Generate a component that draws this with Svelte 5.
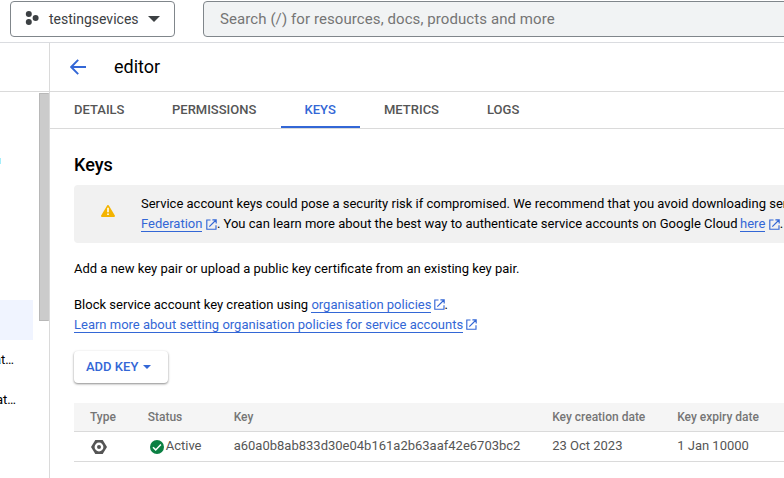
<script>
  const tabs = [
    { name: 'DETAILS', width: 98 },
    { name: 'PERMISSIONS', width: 133 },
    { name: 'KEYS', width: 79, active: true },
    { name: 'METRICS', width: 103 },
    { name: 'LOGS', width: 80 }
  ];
</script>

{#snippet external()}
  <svg class="ext" width="11" height="11" viewBox="0 0 11 11" fill="none" stroke="currentColor" stroke-width="1.15">
    <path d="M4.5 1H.8v9.2h9.2V6.3M6.4.8h3.8v3.8M10 1 3.3 7.7" />
  </svg>
{/snippet}

<div class="page">
  <header class="topbar">
    <button class="project">
      <svg width="14" height="14" viewBox="0 0 14 14" fill="#3c4043">
        <circle cx="3.8" cy="3" r="3" /><circle cx="3.8" cy="11" r="3" /><circle cx="10.6" cy="7" r="3" />
      </svg>
      <span>testingsevices</span>
      <svg class="caret" width="12" height="6" viewBox="0 0 12 6"><path d="M0 0h12L6 6z" fill="#3c4043" /></svg>
    </button>
    <div class="search"><span>Search (/) for resources, docs, products and more</span></div>
  </header>

  <div class="body">
    <aside>
      <div class="sidehead"></div>
      <div class="sidebody">
        <nav>
          <i class="speck"></i>
          <div class="selected"></div>
          <div class="item"><span>at…</span></div>
          <div class="item second"><span>at…</span></div>
        </nav>
        <div class="thumb"></div>
      </div>
    </aside>

    <main>
      <div class="title">
        <svg width="16" height="16" viewBox="0 0 16 16" fill="none" stroke="#3367d6" stroke-width="1.9"><path d="M8.2.8 1.2 8l7 7.2M1.3 8H16" /></svg>
        <h1>editor</h1>
      </div>
      <div class="tabs">
        {#each tabs as tab}
          <div class="tab" class:active={tab.active} style:width="{tab.width}px"><span>{tab.name}</span></div>
        {/each}
      </div>

      <section>
        <h2>Keys</h2>
        <div class="notice">
          <svg width="14" height="12" viewBox="0 0 14 12">
            <path d="M7 1 13 11H1z" fill="#f4b400" stroke="#f4b400" stroke-width="2" stroke-linejoin="round" />
            <path d="M6.2 2.7h1.6v4.5H6.2zM6.2 8.4h1.6v1.5H6.2z" fill="#fff" />
          </svg>
          <div class="message">
            <div>Service account keys could pose a security risk if compromised. We recommend that you avoid downloading service account keys</div>
            <div class="links"><a href="#wif">Federation</a>{@render external()}<span>. You can learn more about the best way to authenticate service accounts on Google Cloud</span><a class="here" href="#here">here</a>{@render external()}<span>.</span></div>
          </div>
        </div>
        <p class="add">Add a new key pair or upload a public key certificate from an existing key pair.</p>
        <p class="block">Block service account key creation using <a href="#policies">organisation policies</a>{@render external()}.</p>
        <p class="learn"><a href="#learn">Learn more about setting organisation policies for service accounts</a>{@render external()}</p>
        <button class="addkey"><span>ADD KEY</span><svg width="8" height="4" viewBox="0 0 8 4"><path d="M0 0h8L4 4z" fill="#3367d6" /></svg></button>

        <div class="table">
          <div class="row head"><div><span>Type</span></div><div><span>Status</span></div><div><span>Key</span></div><div><span>Key creation date</span></div><div><span>Key expiry date</span></div></div>
          <div class="row">
            <div>
              <svg class="hex" width="16" height="14" viewBox="0 0 16 14"><path fill-rule="evenodd" fill="#555" d="M4.3 0h7.4L16 7l-4.3 7H4.3L0 7zM8 2.6a4.4 4.4 0 1 0 0 8.8 4.4 4.4 0 0 0 0-8.8zM8 5a2 2 0 1 1 0 4 2 2 0 0 1 0-4z" /></svg>
            </div>
            <div class="status">
              <svg width="14" height="14" viewBox="0 0 14 14"><circle cx="7" cy="7" r="7" fill="#0b8043" /><path d="m3 7.3 2.7 2.6 5.2-5.5" fill="none" stroke="#fff" stroke-width="1.5" /></svg>
              <span>Active</span>
            </div>
            <div><span>a60a0b8ab833d30e04b161a2b63aaf42e6703bc2</span></div>
            <div><span>23 Oct 2023</span></div>
            <div><span>1 Jan 10000</span></div>
          </div>
        </div>
      </section>
    </main>
  </div>
</div>

<style>
  .page { width: 784px; height: 478px; overflow: hidden; background: #fff; font: 13px/20px Roboto, sans-serif; color: #000; box-sizing: border-box; display: flex; flex-direction: column; }
  .page * { box-sizing: border-box; }
  svg { display: block; flex: none; }
  button { font-family: inherit; margin: 0; background: #fff; }
  .topbar { height: 43px; flex: none; border-bottom: 1px solid #dadce0; display: flex; padding: 1px 0 0 10px; }
  .project { width: 165px; height: 36px; border: 1px solid #80868b; border-radius: 4px; padding: 0 0 0 14px; display: flex; align-items: center; font-size: 14px; color: #3c4043; flex: none; }
  .project svg:first-child { margin-top: -3px; }
  .project span { margin-left: 10px; width: 90px; text-align: left; white-space: nowrap; }
  .project .caret { margin-left: 9px; }
  .search { margin-left: 28px; width: 700px; height: 36px; border: 1px solid #80868b; border-radius: 4px; background: #f1f3f4; padding-left: 16px; font-size: 15px; letter-spacing: .085px; line-height: 34px; color: #757575; white-space: nowrap; flex: none; }
  .body { display: flex; flex: 1; min-height: 0; }
  aside { width: 50px; flex: none; border-right: 1px solid #dadada; }
  .sidehead { height: 49px; border-bottom: 1px solid #dadada; }
  .sidebody { display: flex; justify-content: space-between; padding-top: 1px; }
  nav { width: 33px; overflow: hidden; padding-top: 65px; }
  .speck { display: block; width: 1px; height: 6px; background: #a5eefa; }
  .selected { margin-top: 136px; height: 40px; background: #f0f4ff; }
  .item { height: 40px; display: flex; align-items: center; margin-left: -6px; }
  .item.second { margin-left: -4px; }
  .thumb { width: 10px; height: 228px; background: #cbcbcb; border: 1px solid #b8b8b8; border-right-color: #cbcbcb; }
  main { flex: 1; min-width: 0; }
  .title { height: 49px; border-bottom: 1px solid #dadada; display: flex; align-items: center; padding-left: 20px; }
  h1 { font-size: 18px; font-weight: 400; line-height: 24px; margin: 0 0 0 28px; }
  .tabs { display: flex; height: 37px; border-bottom: 1px solid #dadada; }
  .tab { height: 36px; padding-left: 24px; line-height: 35px; font-size: 13px; font-weight: 500; color: #555; flex: none; }
  .tab.active { padding-left: 23.5px; color: #3367d6; border-bottom: 2px solid #3367d6; }
  section { padding-left: 24px; }
  h2 { font-size: 18px; line-height: 24px; font-weight: 500; margin: 24px 0 8px; }
  .notice { height: 58px; width: 760px; background: #f1f1f1; border-radius: 4px; display: flex; align-items: flex-start; padding: 9px 0 0 27px; }
  .notice > svg { margin-top: 11px; }
  .message { margin-left: 26px; white-space: nowrap; }
  .links { display: flex; }
  .links .ext { margin: 5px 0 0 4px; }
  .links .here { margin-left: 2.5px; }
  .ext { display: inline-block; vertical-align: -1px; margin-left: 3px; margin-right: -.5px; color: #3367d6; }
  .links .ext { margin-right: -.5px; }
  a { color: #3367d6; text-decoration: none; height: 18px; display: inline-block; line-height: 20px; border-bottom: 1px solid #3367d6; }
  p a { vertical-align: top; }
  p { margin: 0; height: 20px; white-space: nowrap; }
  .add { margin-top: 16px; }
  .block { margin-top: 16px; }
  .block .ext, .learn .ext { margin-left: 2.5px; }
  .addkey { display: flex; align-items: center; width: 94px; height: 32px; margin-top: 16px; border: 0; border-radius: 4px; padding: 0 0 0 12px; box-shadow: 0 1px 3px rgba(0,0,0,.22), 0 1px 2px rgba(0,0,0,.28); color: #3367d6; font-size: 13px; line-height: 20px; font-weight: 500; white-space: nowrap; }
  .addkey span { margin-top: -1px; }
  .addkey svg { margin-left: 5px; }
  .table { margin-top: 20px; width: 760px; color: #555; }
  .row { display: grid; grid-template-columns: 57.7px 86px 318.5px 125px 150px; padding-left: 16px; height: 30px; border-bottom: 1px solid #dadada; line-height: 28px; white-space: nowrap; }
  .head { height: 29px; background: #f5f5f5; color: #757575; font-size: 12px; font-weight: 500; }
  .hex { margin: 8px 0 0 1px; }
  .status { display: flex; }
  .status svg { margin: 8px 2px 0; }
</style>
